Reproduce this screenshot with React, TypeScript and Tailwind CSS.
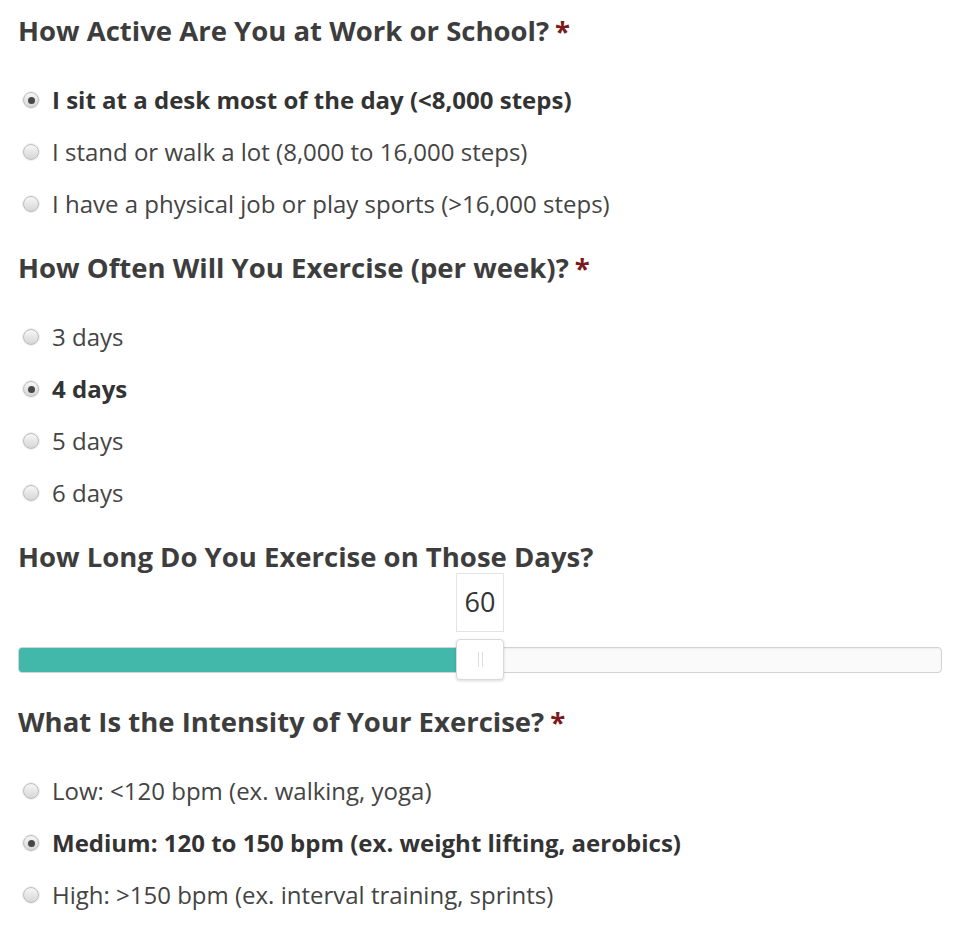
import React from "react";

type Option = { label: string; checked?: boolean };

const activity: Option[] = [
  { label: "I sit at a desk most of the day (<8,000 steps)", checked: true },
  { label: "I stand or walk a lot (8,000 to 16,000 steps)" },
  { label: "I have a physical job or play sports (>16,000 steps)" },
];

const frequency: Option[] = [
  { label: "3 days" },
  { label: "4 days", checked: true },
  { label: "5 days" },
  { label: "6 days" },
];

const intensity: Option[] = [
  { label: "Low: <120 bpm (ex. walking, yoga)" },
  { label: "Medium: 120 to 150 bpm (ex. weight lifting, aerobics)", checked: true },
  { label: "High: >150 bpm (ex. interval training, sprints)" },
];

function Heading({ text, required }: { text: string; required?: boolean }) {
  return (
    <h2 className="h-[36px] flex items-center text-[27.5px] font-bold text-[#3d3d3d] leading-none whitespace-nowrap">
      {text}
      {required && <span className="ml-[6px] text-[#7a1a1a]">*</span>}
    </h2>
  );
}

function Radio({ checked }: { checked?: boolean }) {
  return (
    <span className="w-[16px] h-[16px] rounded-full border border-[#bdbdbd] bg-gradient-to-b from-[#f7f7f7] to-[#d6d6d6] flex items-center justify-center shrink-0 shadow-[0_0_0_1px_#efefef]">
      {checked && <span className="w-[7px] h-[7px] rounded-full bg-[#474747]" />}
    </span>
  );
}

function RadioGroup({ options }: { options: Option[] }) {
  return (
    <div className="mt-[25px]">
      {options.map((o) => (
        <label key={o.label} className="h-[52px] flex items-center pl-[5px]">
          <Radio checked={o.checked} />
          <span
            className={
              "ml-[13px] text-[24px] leading-none whitespace-nowrap " +
              (o.checked ? "font-bold text-[#333]" : "text-[#444]")
            }
          >
            {o.label}
          </span>
        </label>
      ))}
    </div>
  );
}

function Slider({ value, max }: { value: number; max: number }) {
  const frac = value / max;
  return (
    <div className="relative h-[129px]">
      {/* value bubble */}
      <div
        className="absolute top-[-2px] w-[48px] h-[59px] border border-[#e4e4e4] bg-white flex items-center justify-center text-[27px] text-[#333]"
        style={{ left: `calc((100% - 48px) * ${frac})` }}
      >
        {value}
      </div>
      {/* track */}
      <div className="absolute top-[72px] left-0 right-0 h-[26px] rounded-[4px] border border-[#d2d2d2] bg-[#fafafa] shadow-[inset_0_1px_2px_rgba(0,0,0,0.06)] overflow-hidden">
        <div
          className="h-full bg-[#41b8aa]"
          style={{ width: `calc((100% - 48px) * ${frac} + 2px)` }}
        />
      </div>
      {/* handle */}
      <div
        className="absolute top-[64px] w-[48px] h-[41px] rounded-[4px] border border-[#d9d9d9] bg-white shadow-[0_1px_3px_rgba(0,0,0,0.15)] flex items-center justify-center gap-[3px]"
        style={{ left: `calc((100% - 48px) * ${frac})` }}
      >
        <span className="w-px h-[15px] bg-[#dcdcdc]" />
        <span className="w-px h-[15px] bg-[#dcdcdc]" />
      </div>
    </div>
  );
}

export default function App() {
  return (
    <div
      className="w-[965px] min-h-[931px] bg-white pl-[18px] pr-[23px] pt-[13px]"
      style={{ fontFamily: '"Open Sans", "Noto Sans", sans-serif' }}
    >
      <section>
        <Heading text="How Active Are You at Work or School?" required />
        <RadioGroup options={activity} />
      </section>
      <section className="mt-[20px]">
        <Heading text="How Often Will You Exercise (per week)?" required />
        <RadioGroup options={frequency} />
      </section>
      <section className="mt-[20px]">
        <Heading text="How Long Do You Exercise on Those Days?" />
        <Slider value={60} max={120} />
      </section>
      <section>
        <Heading text="What Is the Intensity of Your Exercise?" required />
        <RadioGroup options={intensity} />
      </section>
    </div>
  );
}
